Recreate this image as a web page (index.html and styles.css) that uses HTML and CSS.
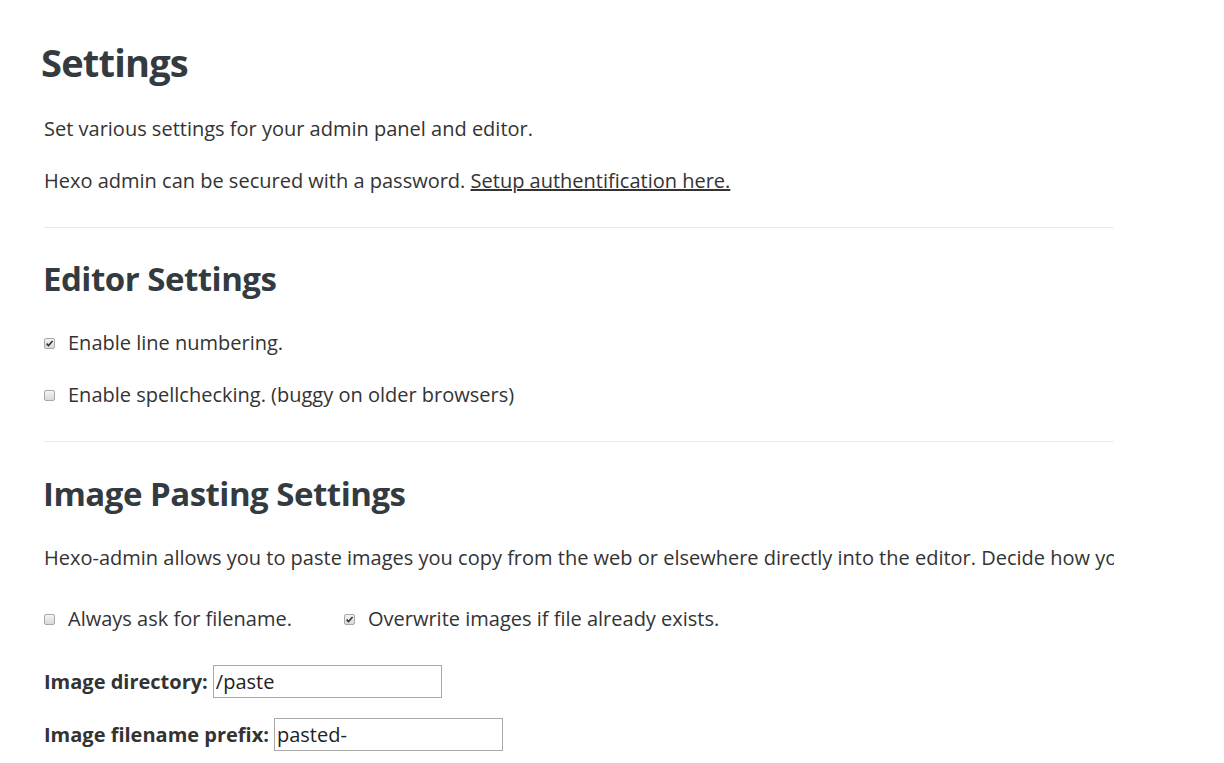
FILE: index.html
```html
<!DOCTYPE html>
<html>
<head>
<meta charset="utf-8">
<link rel="stylesheet" href="styles.css">
</head>
<body>
<div class="page">
  <h1 class="title">Settings</h1>
  <p class="text p1">Set various settings for your admin panel and editor.</p>
  <p class="text p2">Hexo admin can be secured with a password. <a class="link" href="#">Setup authentification here.</a></p>
  <div class="rule r1"></div>
  <h2 class="sub s1">Editor Settings</h2>
  <label class="check row1"><span class="cb on"><svg viewBox="0 0 11 11" width="11" height="11"><path d="M2.6 5.6 L4.5 7.6 L8.6 3" fill="none" stroke="#333" stroke-width="1.6"/></svg></span><span>Enable line numbering.</span></label>
  <label class="check row2"><span class="cb"></span><span>Enable spellchecking. (buggy on older browsers)</span></label>
  <div class="rule r2"></div>
  <h2 class="sub s2">Image Pasting Settings</h2>
  <p class="text p3">Hexo-admin allows you to paste images you copy from the web or elsewhere directly into the editor. Decide how you want the pasted images to be stored.</p>
  <div class="pair">
    <label class="check half"><span class="cb"></span><span>Always ask for filename.</span></label>
    <label class="check"><span class="cb on"><svg viewBox="0 0 11 11" width="11" height="11"><path d="M2.6 5.6 L4.5 7.6 L8.6 3" fill="none" stroke="#333" stroke-width="1.6"/></svg></span><span>Overwrite images if file already exists.</span></label>
  </div>
  <div class="field f1"><span class="lbl">Image directory:</span> <input class="inp w1" type="text" value="/paste"></div>
  <div class="field f2"><span class="lbl">Image filename prefix:</span> <input class="inp w2" type="text" value="pasted-"></div>
</div>
</body>
</html>
```
FILE: styles.css
```css
html, body {
  margin: 0;
  padding: 0;
  background: #fff;
}
body {
  font-family: "Open Sans", "Liberation Sans", sans-serif;
  color: #333;
}
.page {
  width: 1070px;
  margin-left: 44px;
  display: flex;
  flex-direction: column;
  align-items: flex-start;
}
.title {
  font-size: 38px;
  font-weight: 700;
  line-height: 50px;
  color: #333b40;
  margin: 37px 0 0 -3px;
  letter-spacing: -0.8px;
}
.text {
  font-size: 20px;
  line-height: 26px;
  margin: 0;
  white-space: nowrap;
}
.p1 { margin-top: 29px; }
.p2 { margin-top: 26px; }
.link { color: #333; text-decoration: underline; }
.rule {
  align-self: stretch;
  height: 1px;
  background: #eaeaea;
}
.r1 { margin-top: 33px; }
.r2 { margin-top: 33px; }
.sub {
  font-size: 33px;
  font-weight: 700;
  line-height: 40px;
  color: #333b40;
  margin: 0 0 0 -1px;
  letter-spacing: -0.5px;
}
.s1 { margin-top: 31px; }
.s2 { margin-top: 32px; }
.check {
  display: flex;
  align-items: center;
  font-size: 20px;
  line-height: 26px;
  gap: 13px;
  white-space: nowrap;
}
.row1 { margin-top: 31px; }
.row2 { margin-top: 26px; }
.cb {
  width: 11px;
  height: 11px;
  box-sizing: border-box;
  border: 1px solid #a8a8a8;
  border-radius: 2px;
  background: linear-gradient(#f4f4f4, #d8d8d8);
  flex: none;
  position: relative;
}
.cb svg {
  position: absolute;
  left: -1px;
  top: -1px;
}
.p3 {
  margin-top: 31px;
  align-self: stretch;
  overflow: hidden;
}
.pair {
  display: flex;
  margin-top: 35px;
}
.half { width: 300px; }
.field {
  font-size: 20px;
  display: flex;
  align-items: center;
  gap: 5px;
  white-space: nowrap;
}
.lbl { font-weight: 700; }
.f1 { margin-top: 33px; }
.f2 { margin-top: 20px; }
.inp {
  font-family: "Open Sans", "Liberation Sans", sans-serif;
  font-size: 20px;
  color: #222;
  height: 33px;
  box-sizing: border-box;
  border: 1px solid #a9a9a9;
  padding: 0 2px;
  margin: 0;
  outline: none;
}
.w1 { width: 229px; }
.w2 { width: 229px; }
```
